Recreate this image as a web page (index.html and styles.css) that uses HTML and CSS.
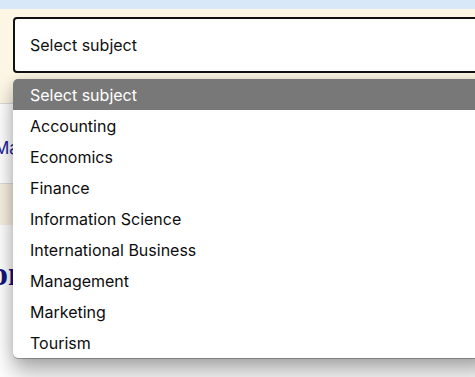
FILE: index.html
```html
<!DOCTYPE html>
<html lang="en">
<head>
<meta charset="utf-8">
<title>Select subject</title>
<link rel="stylesheet" href="styles.css">
</head>
<body>
  <div class="topbar"></div>
  <section class="filter">
    <div class="select">Select subject</div>
  </section>
  <nav class="nav"><a class="nav-link">Main</a></nav>
  <div class="notice"></div>
  <h1 class="title">on</h1>

  <ul class="dropdown">
    <li class="option selected">Select subject</li>
    <li class="option">Accounting</li>
    <li class="option">Economics</li>
    <li class="option">Finance</li>
    <li class="option">Information Science</li>
    <li class="option">International Business</li>
    <li class="option">Management</li>
    <li class="option">Marketing</li>
    <li class="option">Tourism</li>
  </ul>
</body>
</html>
```
FILE: styles.css
```css
html, body {
  margin: 0;
  padding: 0;
}
body {
  width: 475px;
  height: 377px;
  overflow: hidden;
  position: relative;
  background: #ffffff;
  font-family: Inter, "Liberation Sans", sans-serif;
}
.topbar {
  height: 9px;
  background: #d8e8f8;
}
.filter {
  height: 95px;
  background: #fdf6e5;
  border-bottom: 1px solid #dcdcdc;
  padding-top: 8px;
  box-sizing: border-box;
}
.select {
  margin-left: 13px;
  width: 480px;
  height: 56px;
  box-sizing: border-box;
  border: 2px solid #111111;
  border-radius: 4px;
  background: #ffffff;
  padding-left: 15px;
  font-size: 16px;
  line-height: 52px;
  color: #111111;
}
.nav {
  height: 80px;
  box-sizing: border-box;
  border-bottom: 1px solid #dcdcdc;
  padding-top: 33px;
}
.nav-link {
  display: block;
  margin-left: -6px;
  font-size: 17px;
  line-height: 22px;
  color: #22229a;
}
.notice {
  height: 41px;
  background: #f8f1e2;
}
.title {
  margin: 30px 0 0 -9px;
  font-family: "Liberation Serif", serif;
  font-size: 34px;
  font-weight: bold;
  color: #15157a;
}
.dropdown {
  position: absolute;
  top: 79px;
  left: 13px;
  width: 480px;
  margin: 0;
  padding: 0;
  list-style: none;
  background: #ffffff;
  border-radius: 5px;
  overflow: hidden;
  box-shadow: 0 1px 0 rgba(0, 0, 0, 0.25), 0 14px 22px rgba(0, 0, 0, 0.32), 0 0 12px rgba(0, 0, 0, 0.12);
}
.option {
  height: 31px;
  line-height: 31px;
  padding: 1px 0 0 17px;
  box-sizing: border-box;
  font-size: 16px;
  color: #0d0d0d;
}
.option.selected {
  background: #787878;
  color: #ffffff;
}
```
